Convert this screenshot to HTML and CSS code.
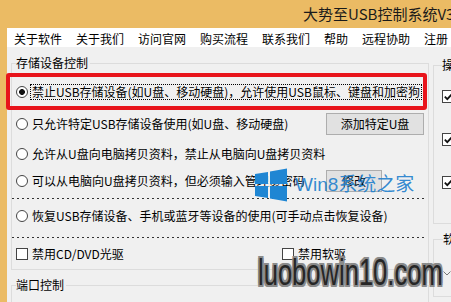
FILE: index.html
```html
<!DOCTYPE html>
<html lang="zh-CN">
<head>
<meta charset="utf-8">
<title>大势至USB控制系统</title>
<link rel="stylesheet" href="styles.css">
</head>
<body>
<div class="app">
  <header class="titlebar"><span class="title">大势至USB控制系统V3</span></header>
  <div class="frame">
    <div class="client">
      <nav class="menu">
        <span class="menu-item">关于软件</span>
        <span class="menu-item">关于我们</span>
        <span class="menu-item">访问官网</span>
        <span class="menu-item">购买流程</span>
        <span class="menu-item">联系我们</span>
        <span class="menu-item">帮助</span>
        <span class="menu-item">远程协助</span>
        <span class="menu-item">注册</span>
      </nav>
      <div class="main">
        <div class="left">
          <fieldset class="group group-storage">
            <legend>存储设备控制</legend>
            <div class="row row-1"><span class="radio checked"></span><span class="label focus">禁止USB存储设备(如U盘、移动硬盘)，允许使用USB鼠标、键盘和加密狗</span></div>
            <div class="row row-2 has-btn">
              <div class="opt"><span class="radio"></span><span class="label">只允许特定USB存储设备使用(如U盘、移动硬盘)</span></div>
              <button class="btn btn-wide">添加特定U盘</button>
            </div>
            <div class="row row-3"><span class="radio"></span><span class="label">允许从U盘向电脑拷贝资料，禁止从电脑向U盘拷贝资料</span></div>
            <div class="row row-4 has-btn">
              <div class="opt"><span class="radio"></span><span class="label">可以从电脑向U盘拷贝资料，但必须输入管理员密码</span></div>
              <button class="btn btn-small">修改</button>
            </div>
            <div class="dash"></div>
            <div class="row row-5"><span class="radio"></span><span class="label">恢复USB存储设备、手机或蓝牙等设备的使用(可手动点击恢复设备)</span></div>
            <div class="dash dash-2"></div>
            <div class="row row-6 checks">
              <span class="check-item"><span class="check"></span><span class="label">禁用CD/DVD光驱</span></span>
              <span class="check-item"><span class="check"></span><span class="label">禁用软驱</span></span>
            </div>
          </fieldset>
          <fieldset class="group group-port">
            <legend>端口控制</legend>
          </fieldset>
        </div>
        <div class="right">
          <fieldset class="group group-ops">
            <legend>操作</legend>
            <div class="ops-list">
              <span class="check checked"><svg viewBox="0 0 11 11" width="11" height="11"><path d="M1.8 5.6 L4.3 8.1 L9.4 2.6" fill="none" stroke="#111" stroke-width="1.8"/></svg></span>
              <span class="check checked"><svg viewBox="0 0 11 11" width="11" height="11"><path d="M1.8 5.6 L4.3 8.1 L9.4 2.6" fill="none" stroke="#111" stroke-width="1.8"/></svg></span>
              <span class="check checked"><svg viewBox="0 0 11 11" width="11" height="11"><path d="M1.8 5.6 L4.3 8.1 L9.4 2.6" fill="none" stroke="#111" stroke-width="1.8"/></svg></span>
            </div>
          </fieldset>
          <fieldset class="group group-soft">
            <legend>软件</legend>
            <div class="combo-arrow"><svg viewBox="0 0 8 5" width="8" height="5"><path d="M0.5 0.5 L4 4 L7.5 0.5" fill="none" stroke="#777" stroke-width="1"/></svg></div>
          </fieldset>
        </div>
      </div>
    </div>
  </div>

  <div class="annot"></div>

  <div class="wm-win8">
    <svg class="win-logo" viewBox="0 0 32 34" width="32" height="34">
      <polygon points="0,6 13,4 13,16 0,16" fill="#1F86D3"/>
      <polygon points="15,3.6 32,0.5 32,16 15,16" fill="#1F86D3"/>
      <polygon points="0,18 13,18 13,30 0,28" fill="#1F86D3"/>
      <polygon points="15,18 32,18 32,33.5 15,30.4" fill="#1F86D3"/>
    </svg>
    <span class="wm-text">Win8系统之家</span>
  </div>

  <div class="wm-luobo"><span class="wm-luobo-text">luobowin10.com</span></div>
</div>
</body>
</html>
```
FILE: styles.css
```css
html, body {
  margin: 0;
  padding: 0;
}

body {
  width: 451px;
  height: 302px;
  overflow: hidden;
  background: #EBBB64;
  font-family: "Noto Sans CJK SC", "Liberation Sans", sans-serif;
  font-size: 12px;
  color: #000;
}

.app {
  position: relative;
  width: 451px;
  height: 302px;
  overflow: hidden;
  display: flex;
  flex-direction: column;
}

.titlebar {
  flex: none;
  height: 28px;
  padding-left: 303px;
  white-space: nowrap;
  overflow: hidden;
  font-size: 15px;
  line-height: 28px;
  color: #1a1a1a;
}

.frame {
  flex: 1;
  min-height: 0;
  display: flex;
  padding-left: 7px;
}

.client {
  flex: 1;
  min-width: 0;
  display: flex;
  flex-direction: column;
  background: #F0F0F0;
}

.menu {
  flex: none;
  box-sizing: border-box;
  height: 19px;
  padding-top: 2px;
  line-height: 17px;
  background: #FFFFFF;
  display: flex;
  white-space: nowrap;
  overflow: hidden;
}

.menu-item {
  padding: 0 7px;
}

.main {
  flex: 1;
  min-height: 0;
  display: flex;
}

.left {
  flex: none;
  width: 426px;
  padding-top: 9px;
  overflow: hidden;
}

.right {
  flex: 1;
  min-width: 0;
  padding-top: 11px;
  overflow: hidden;
}

.group {
  margin: 0;
  padding: 0;
  min-width: 0;
  border: 1px solid #DCDCDC;
}

.group legend {
  padding: 0 2px 0 0;
  font-size: 12px;
  line-height: 14px;
  white-space: nowrap;
}

.group-storage {
  margin: 0 4px;
  padding: 7px 4px 0 4px;
}

.row {
  display: flex;
  align-items: center;
  white-space: nowrap;
}

.row-1 { height: 30px; }
.row-2 { height: 34px; }
.row-3 { height: 26px; }
.row-4 { height: 28px; }
.row-5 { height: 34px; }
.row-6 { height: 31px; }

.has-btn {
  display: grid;
  grid-template-columns: 1fr 98px;
  align-items: center;
}

.opt {
  display: flex;
  align-items: center;
}

.label {
  line-height: 14px;
}

.radio {
  flex: none;
  box-sizing: border-box;
  width: 12px;
  height: 12px;
  margin-right: 4px;
  border: 1px solid #444;
  border-radius: 50%;
  background: #fff;
}

.radio.checked {
  background: radial-gradient(circle, #111 0 2.6px, #fff 3.2px);
}

.focus {
  margin-left: -1px;
  padding: 0 1px;
  outline: 1px dotted #000;
}

.btn {
  box-sizing: border-box;
  height: 22px;
  padding: 0;
  border: 1px solid #ADADAD;
  background: #E1E1E1;
  font-family: inherit;
  font-size: 12px;
  line-height: 18px;
  color: #000;
}

.btn-wide { width: 98px; }
.btn-small { width: 56px; justify-self: start; }

.dash {
  height: 1px;
  margin: 3px -3px 0 -4px;
  background: repeating-linear-gradient(90deg, #333 0 2px, transparent 2px 5px);
}

.dash-2 {
  margin-top: 4px;
}

.checks {
  display: grid;
  grid-template-columns: 266px 1fr;
  align-items: center;
}

.check-item {
  display: flex;
  align-items: center;
}

.check {
  flex: none;
  box-sizing: border-box;
  display: block;
  width: 12px;
  height: 12px;
  margin-right: 4px;
  border: 1px solid #444;
  background: #fff;
}

.group-port {
  margin: 8px 4px 0 4px;
  padding: 0 4px 40px 4px;
}

.group-ops {
  border-right: none;
  padding: 0 0 34px 8px;
}

.ops-list {
  display: flex;
  flex-direction: column;
  gap: 30px;
  padding-top: 18px;
}

.ops-list .check {
  width: 13px;
  height: 13px;
  margin: 0;
}

.ops-list .check svg {
  display: block;
}

.group-soft {
  margin-top: 8px;
  border-right: none;
  padding: 0 0 20px 9px;
}

.combo-arrow {
  margin-top: 25px;
  height: 5px;
}

.combo-arrow svg {
  display: block;
}

/* Annotation overlay: red highlight box */
.annot {
  position: absolute;
  left: 6px;
  top: 73px;
  width: 421px;
  height: 37px;
  box-sizing: border-box;
  border: 4px solid #E8141B;
  border-radius: 3px;
}

/* Watermarks overlaid on the screenshot */
.wm-win8 {
  position: absolute;
  left: 255px;
  top: 168px;
  display: flex;
  align-items: center;
  gap: 8px;
  white-space: nowrap;
}

.win-logo {
  display: block;
  flex: none;
}

.wm-text {
  font-family: "Liberation Sans", "Noto Sans CJK SC", sans-serif;
  font-size: 19px;
  line-height: 24px;
  color: rgba(35, 128, 205, 0.92);
}

.wm-luobo {
  position: absolute;
  left: 258px;
  top: 255px;
  white-space: nowrap;
}

.wm-luobo-text {
  display: inline-block;
  font-family: "Liberation Sans", sans-serif;
  font-size: 36px;
  line-height: 36px;
  color: #262626;
  transform: scaleX(0.71);
  transform-origin: left center;
  text-shadow:
    2px 0 #8a8a8a, -2px 0 #8a8a8a, 0 2px #8a8a8a, 0 -2px #8a8a8a,
    2px 2px #8a8a8a, -2px -2px #8a8a8a, 2px -2px #8a8a8a, -2px 2px #8a8a8a,
    0 0 4px #cfcfcf;
}
```
